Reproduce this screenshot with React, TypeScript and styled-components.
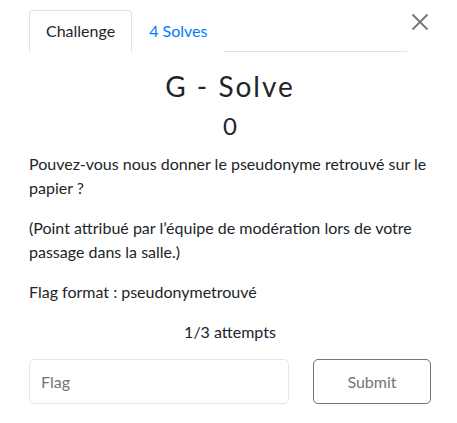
import React from "react";
import styled, { createGlobalStyle } from "styled-components";

const GlobalStyle = createGlobalStyle`
  html, body {
    margin: 0;
    padding: 0;
    background: #fff;
  }
  body {
    font-family: Lato, "Open Sans", sans-serif;
    color: #212529;
    font-size: 16px;
    line-height: 1.5;
  }
`;

const Modal = styled.div`
  position: relative;
  width: 457px;
  padding: 10px 26px 0 29px;
  box-sizing: border-box;
`;

const CloseButton = styled.button`
  position: absolute;
  top: 12px;
  right: 27px;
  width: 20px;
  height: 20px;
  padding: 0;
  border: none;
  background: none;
  cursor: pointer;
  display: flex;
  align-items: center;
  justify-content: center;
`;

const Tabs = styled.nav`
  display: flex;
  margin-right: 24px;
  border-bottom: 1px solid #dee2e6;
`;

const Tab = styled.a<{ $active?: boolean }>`
  display: block;
  padding: 8px 16px;
  margin-bottom: -1px;
  border: 1px solid ${(p) => (p.$active ? "#dee2e6" : "transparent")};
  border-bottom-color: ${(p) => (p.$active ? "#fff" : "transparent")};
  border-radius: 4px 4px 0 0;
  color: ${(p) => (p.$active ? "#212529" : "#007bff")};
  background: #fff;
  font-size: 16px;
  line-height: 24px;
  text-decoration: none;
  cursor: pointer;
`;

const Title = styled.h3`
  margin: 18px 0 0;
  text-align: center;
  font-size: 28px;
  font-weight: 400;
  line-height: 1.2;
  letter-spacing: 2px;
`;

const Points = styled.h4`
  margin: 8px 0 12px;
  text-align: center;
  font-size: 24px;
  font-weight: 400;
  line-height: 1.2;
`;

const Description = styled.div`
  p {
    margin: 0 0 16px;
    font-size: 16px;
    line-height: 24px;
  }
`;

const Attempts = styled.p`
  margin: 0 0 15px;
  text-align: center;
  font-size: 16px;
  line-height: 24px;
`;

const SubmitRow = styled.form`
  display: flex;
  gap: 24px;
  margin: 0;
`;

const FlagInput = styled.input`
  flex: 0 0 260px;
  box-sizing: border-box;
  height: 45px;
  padding: 0 11px;
  border: 1px solid #e3e5e8;
  border-radius: 5px;
  font-family: inherit;
  font-size: 16px;
  color: #495057;
  outline: none;
  &::placeholder {
    color: #6c757d;
  }
`;

const SubmitButton = styled.button`
  flex: 0 0 118px;
  box-sizing: border-box;
  height: 45px;
  border: 1px solid #6c757d;
  border-radius: 5px;
  background: #fff;
  color: #6c757d;
  font-family: inherit;
  font-size: 16px;
  cursor: pointer;
`;

export default function App() {
  return (
    <>
      <GlobalStyle />
      <Modal>
        <CloseButton aria-label="Close">
          <svg width="18" height="18" viewBox="0 0 18 18">
            <path d="M1.5 1.5 L16.5 16.5 M16.5 1.5 L1.5 16.5" stroke="#7a7a7a" strokeWidth="2" />
          </svg>
        </CloseButton>
        <Tabs>
          <Tab $active>Challenge</Tab>
          <Tab>4 Solves</Tab>
        </Tabs>
        <Title>G - Solve</Title>
        <Points>0</Points>
        <Description>
          <p>Pouvez-vous nous donner le pseudonyme retrouvé sur le papier ?</p>
          <p>(Point attribué par l’équipe de modération lors de votre passage dans la salle.)</p>
          <p>Flag format : pseudonymetrouvé</p>
        </Description>
        <Attempts>1/3 attempts</Attempts>
        <SubmitRow onSubmit={(e) => e.preventDefault()}>
          <FlagInput placeholder="Flag" />
          <SubmitButton type="submit">Submit</SubmitButton>
        </SubmitRow>
      </Modal>
    </>
  );
}
